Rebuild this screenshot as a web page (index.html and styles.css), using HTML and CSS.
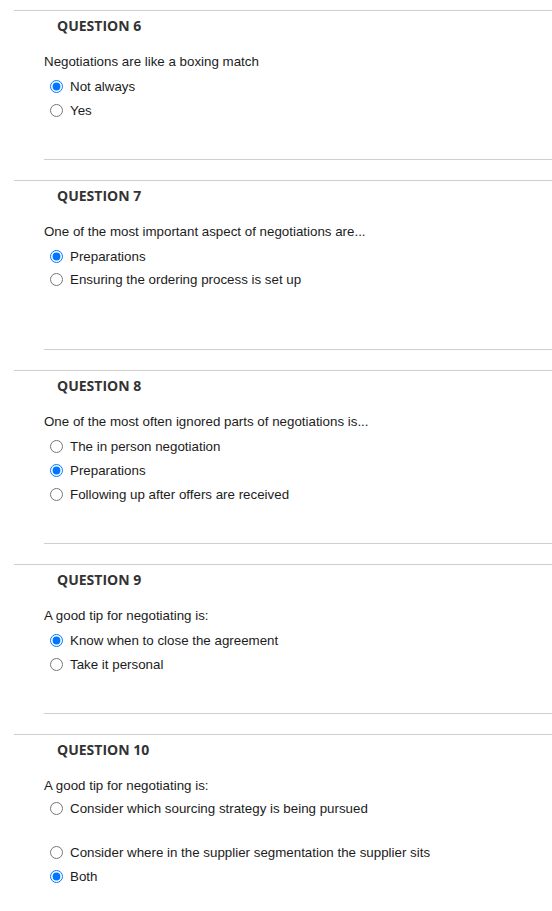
FILE: index.html
```html
<!DOCTYPE html>
<html lang="en">
<head>
<meta charset="utf-8">
<title>Quiz</title>
<link rel="stylesheet" href="styles.css">
</head>
<body>
<div class="quiz">
  <section class="question">
    <h2 class="q-title">QUESTION 6</h2>
    <p class="q-text">Negotiations are like a boxing match</p>
    <div class="options">
      <label class="opt"><input type="radio" name="q6" checked><span>Not always</span></label>
      <label class="opt"><input type="radio" name="q6"><span>Yes</span></label>
    </div>
    <div class="q-end"></div>
  </section>

  <section class="question">
    <h2 class="q-title">QUESTION 7</h2>
    <p class="q-text">One of the most important aspect of negotiations are...</p>
    <div class="options">
      <label class="opt"><input type="radio" name="q7" checked><span>Preparations</span></label>
      <label class="opt short"><input type="radio" name="q7"><span>Ensuring the ordering process is set up</span></label>
      <div class="spacer"></div>
    </div>
    <div class="q-end"></div>
  </section>

  <section class="question">
    <h2 class="q-title">QUESTION 8</h2>
    <p class="q-text">One of the most often ignored parts of negotiations is...</p>
    <div class="options">
      <label class="opt"><input type="radio" name="q8"><span>The in person negotiation</span></label>
      <label class="opt"><input type="radio" name="q8" checked><span>Preparations</span></label>
      <label class="opt"><input type="radio" name="q8"><span>Following up after offers are received</span></label>
    </div>
    <div class="q-end"></div>
  </section>

  <section class="question">
    <h2 class="q-title">QUESTION 9</h2>
    <p class="q-text">A good tip for negotiating is:</p>
    <div class="options">
      <label class="opt"><input type="radio" name="q9" checked><span>Know when to close the agreement</span></label>
      <label class="opt"><input type="radio" name="q9"><span>Take it personal</span></label>
    </div>
    <div class="q-end"></div>
  </section>

  <section class="question">
    <h2 class="q-title">QUESTION 10</h2>
    <p class="q-text">A good tip for negotiating is:</p>
    <div class="options">
      <label class="opt lift"><input type="radio" name="q10"><span>Consider which sourcing strategy is being pursued</span></label>
      <div class="spacer small"></div>
      <label class="opt"><input type="radio" name="q10"><span>Consider where in the supplier segmentation the supplier sits</span></label>
      <label class="opt"><input type="radio" name="q10" checked><span>Both</span></label>
    </div>
    <div class="q-end"></div>
  </section>
</div>
</body>
</html>
```

FILE: styles.css
```css
html, body {
  margin: 0;
  padding: 0;
  background: #ffffff;
}

body {
  font-family: "Liberation Sans", Arial, sans-serif;
  font-size: 13.33px;
  color: #1c1c1c;
}

.quiz {
  padding-top: 10px;
  margin-left: 14px;
}

.question {
  border-top: 1px solid #cfcfcf;
  margin-bottom: 20px;
}

.q-title {
  margin: 5px 0 0 0;
  padding-left: 43px;
  font-family: "Open Sans", "Liberation Sans", sans-serif;
  font-weight: 700;
  font-size: 14px;
  line-height: 20px;
  color: #333333;
}

.q-text {
  margin: 14px 0 0 0;
  padding-left: 30px;
  line-height: 24px;
}

.options {
  display: flex;
  flex-direction: column;
}

.opt {
  display: flex;
  align-items: center;
  height: 24px;
  padding-left: 36px;
}

.opt.short {
  height: 22px;
}

.opt.lift {
  margin-top: -2px;
}

.opt input {
  width: 13px;
  height: 13px;
  margin: 0 7px 0 0;
  flex: none;
}

.spacer {
  height: 22px;
}

.spacer.small {
  height: 20px;
}

.q-end {
  margin-top: 37px;
  margin-left: 30px;
  border-top: 1px solid #cfcfcf;
}
```
